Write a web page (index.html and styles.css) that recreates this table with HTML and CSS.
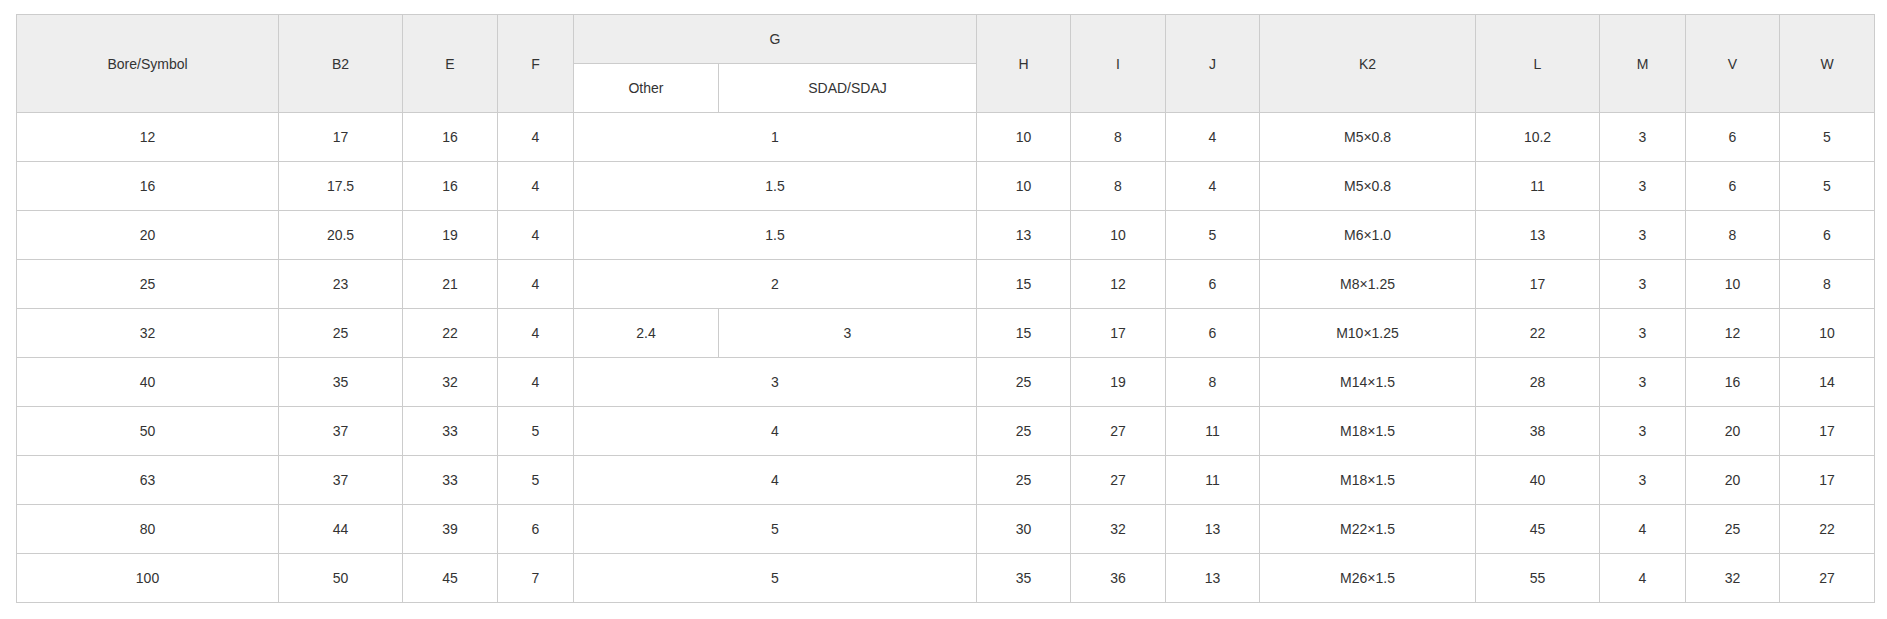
FILE: index.html
```html
<!DOCTYPE html>
<html>
<head>
<meta charset="utf-8">
<link rel="stylesheet" href="styles.css">
</head>
<body>
<div class="wrap">
<table class="spec">
<colgroup>
<col class="c-bore"><col class="c-b2"><col class="c-e"><col class="c-f"><col class="c-other"><col class="c-sdad"><col class="c-h"><col class="c-i"><col class="c-j"><col class="c-k2"><col class="c-l"><col class="c-m"><col class="c-v"><col class="c-w">
</colgroup>
<thead>
<tr>
<th rowspan="2">Bore/Symbol</th><th rowspan="2">B2</th><th rowspan="2">E</th><th rowspan="2">F</th><th colspan="2">G</th><th rowspan="2">H</th><th rowspan="2">I</th><th rowspan="2">J</th><th rowspan="2">K2</th><th rowspan="2">L</th><th rowspan="2">M</th><th rowspan="2">V</th><th rowspan="2">W</th>
</tr>
<tr>
<th class="sub">Other</th><th class="sub">SDAD/SDAJ</th>
</tr>
</thead>
<tbody>
<tr><td>12</td><td>17</td><td>16</td><td>4</td><td colspan="2">1</td><td>10</td><td>8</td><td>4</td><td>M5×0.8</td><td>10.2</td><td>3</td><td>6</td><td>5</td></tr>
<tr><td>16</td><td>17.5</td><td>16</td><td>4</td><td colspan="2">1.5</td><td>10</td><td>8</td><td>4</td><td>M5×0.8</td><td>11</td><td>3</td><td>6</td><td>5</td></tr>
<tr><td>20</td><td>20.5</td><td>19</td><td>4</td><td colspan="2">1.5</td><td>13</td><td>10</td><td>5</td><td>M6×1.0</td><td>13</td><td>3</td><td>8</td><td>6</td></tr>
<tr><td>25</td><td>23</td><td>21</td><td>4</td><td colspan="2">2</td><td>15</td><td>12</td><td>6</td><td>M8×1.25</td><td>17</td><td>3</td><td>10</td><td>8</td></tr>
<tr><td>32</td><td>25</td><td>22</td><td>4</td><td>2.4</td><td>3</td><td>15</td><td>17</td><td>6</td><td>M10×1.25</td><td>22</td><td>3</td><td>12</td><td>10</td></tr>
<tr><td>40</td><td>35</td><td>32</td><td>4</td><td colspan="2">3</td><td>25</td><td>19</td><td>8</td><td>M14×1.5</td><td>28</td><td>3</td><td>16</td><td>14</td></tr>
<tr><td>50</td><td>37</td><td>33</td><td>5</td><td colspan="2">4</td><td>25</td><td>27</td><td>11</td><td>M18×1.5</td><td>38</td><td>3</td><td>20</td><td>17</td></tr>
<tr><td>63</td><td>37</td><td>33</td><td>5</td><td colspan="2">4</td><td>25</td><td>27</td><td>11</td><td>M18×1.5</td><td>40</td><td>3</td><td>20</td><td>17</td></tr>
<tr><td>80</td><td>44</td><td>39</td><td>6</td><td colspan="2">5</td><td>30</td><td>32</td><td>13</td><td>M22×1.5</td><td>45</td><td>4</td><td>25</td><td>22</td></tr>
<tr><td>100</td><td>50</td><td>45</td><td>7</td><td colspan="2">5</td><td>35</td><td>36</td><td>13</td><td>M26×1.5</td><td>55</td><td>4</td><td>32</td><td>27</td></tr>
</tbody>
</table>
</div>
</body>
</html>
```
FILE: styles.css
```css
html, body {
  margin: 0;
  padding: 0;
  background: #fff;
}
.wrap {
  padding: 14px 12px 0 16px;
}
.spec {
  border-collapse: collapse;
  table-layout: fixed;
  width: 1859px;
  font-family: "Liberation Sans", Arial, sans-serif;
  font-size: 14px;
  color: #333;
}
.spec th,
.spec td {
  border: 1px solid #cccccc;
  padding: 0;
  height: 48px;
  text-align: center;
  vertical-align: middle;
  font-weight: normal;
}
.spec thead th {
  background: #eeeeee;
}
.spec thead th.sub {
  background: #ffffff;
}
.c-bore { width: 262px; }
.c-b2 { width: 124px; }
.c-e { width: 95px; }
.c-f { width: 76px; }
.c-other { width: 145px; }
.c-sdad { width: 258px; }
.c-h { width: 94px; }
.c-i { width: 95px; }
.c-j { width: 94px; }
.c-k2 { width: 216px; }
.c-l { width: 124px; }
.c-m { width: 86px; }
.c-v { width: 94px; }
.c-w { width: 95px; }
```
